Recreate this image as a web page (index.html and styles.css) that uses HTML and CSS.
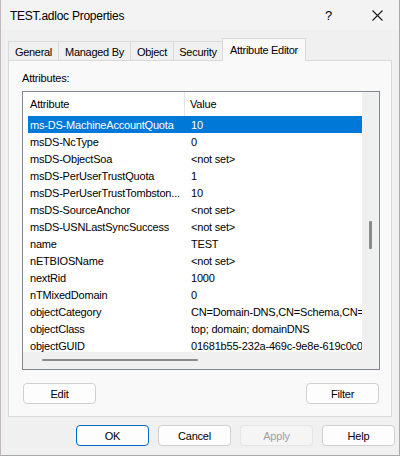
FILE: index.html
```html
<!DOCTYPE html>
<html>
<head>
<meta charset="utf-8">
<link rel="stylesheet" href="styles.css">
</head>
<body>
<div class="window">
  <div class="titlebar">
    <span class="title">TEST.adloc Properties</span>
    <span class="help">?</span>
    <svg class="close" width="11" height="11" viewBox="0 0 11 11"><path d="M0.5 0.5 L10.5 10.5 M10.5 0.5 L0.5 10.5" stroke="#1a1a1a" stroke-width="1.1" fill="none"/></svg>
  </div>
  <div class="tabs">
    <div class="tab t-general">General</div>
    <div class="tab t-managed">Managed By</div>
    <div class="tab t-object">Object</div>
    <div class="tab t-security">Security</div>
    <div class="tab active">Attribute Editor</div>
  </div>
  <div class="panel">
    <div class="label">Attributes:</div>
    <div class="listview">
      <div class="content">
        <div class="header">
          <div class="hcell hattr">Attribute</div>
          <div class="hcell hval">Value</div>
        </div>
        <div class="row selected"><div class="c1">ms-DS-MachineAccountQuota</div><div class="c2">10</div></div>
        <div class="row"><div class="c1">msDS-NcType</div><div class="c2">0</div></div>
        <div class="row"><div class="c1">msDS-ObjectSoa</div><div class="c2">&lt;not set&gt;</div></div>
        <div class="row"><div class="c1">msDS-PerUserTrustQuota</div><div class="c2">1</div></div>
        <div class="row"><div class="c1">msDS-PerUserTrustTombston...</div><div class="c2">10</div></div>
        <div class="row"><div class="c1">msDS-SourceAnchor</div><div class="c2">&lt;not set&gt;</div></div>
        <div class="row"><div class="c1">msDS-USNLastSyncSuccess</div><div class="c2">&lt;not set&gt;</div></div>
        <div class="row"><div class="c1">name</div><div class="c2">TEST</div></div>
        <div class="row"><div class="c1">nETBIOSName</div><div class="c2">&lt;not set&gt;</div></div>
        <div class="row"><div class="c1">nextRid</div><div class="c2">1000</div></div>
        <div class="row"><div class="c1">nTMixedDomain</div><div class="c2">0</div></div>
        <div class="row"><div class="c1">objectCategory</div><div class="c2">CN=Domain-DNS,CN=Schema,CN=Configuration,DC=TEST,DC=adloc</div></div>
        <div class="row"><div class="c1">objectClass</div><div class="c2">top; domain; domainDNS</div></div>
        <div class="row"><div class="c1">objectGUID</div><div class="c2">01681b55-232a-469c-9e8e-619c0c0a1b2c</div></div>
      </div>
      <div class="vscroll"><div class="vthumb"></div></div>
      <div class="hscroll"><div class="hthumb"></div></div>
      <div class="corner"></div>
    </div>
    <div class="panel-buttons">
      <button class="btn">Edit</button>
      <button class="btn">Filter</button>
    </div>
  </div>
  <div class="footer">
    <button class="btn default">OK</button>
    <button class="btn">Cancel</button>
    <button class="btn disabled">Apply</button>
    <button class="btn">Help</button>
  </div>
</div>
</body>
</html>
```
FILE: styles.css
```css
* { box-sizing: border-box; }
html, body { margin: 0; padding: 0; }
body {
  width: 400px;
  height: 456px;
  overflow: hidden;
  font-family: "Liberation Sans", Arial, sans-serif;
  font-size: 11px;
  color: #000;
  background: #f0f0f0;
}
.window {
  width: 400px;
  height: 456px;
  background: #f0f0f0;
  border-left: 1px solid #c4b6bb;
  border-right: 1px solid #a9a9a9;
  border-bottom: 1px solid #a9a9a9;
  display: flex;
  flex-direction: column;
}
.titlebar {
  height: 30px;
  flex: none;
  display: flex;
  align-items: center;
  padding-left: 9px;
  background: #f3f3f3;
}
.title {
  font-size: 12px;
  letter-spacing: -0.25px;
  flex: 1;
  padding-top: 1px;
}
.help {
  font-size: 13px;
  width: 10px;
  margin-right: 37px;
  padding-top: 1px;
}
.close {
  margin-right: 16px;
}
.tabs {
  height: 30px;
  flex: none;
  display: flex;
  align-items: flex-end;
  padding-left: 7px;
  padding-top: 8px;
}
.tab {
  height: 19px;
  display: flex;
  align-items: center;
  padding: 1px 0 0 0;
  justify-content: center;
  border: 1px solid #d9d9d9;
  border-bottom: none;
  border-right: none;
  background: #f0f0f0;
  letter-spacing: -0.3px;
  font-size: 11px;
}
.t-general { width: 50px; }
.t-managed { width: 72px; }
.t-object { width: 43px; }
.t-security { width: 49px; border-right: none; }
.tab.active {
  height: 23px;
  width: 84px;
  background: #f9f9f9;
  border: 1px solid #d9d9d9;
  border-bottom: none;
  margin-bottom: -1px;
  position: relative;
  z-index: 1;
  padding-bottom: 2px;
}
.panel {
  width: 384px;
  height: 357px;
  margin-left: 7px;
  background: #f9f9f9;
  border: 1px solid #d9d9d9;
  display: flex;
  flex-direction: column;
  padding: 10px 11px 0 13px;
}
.label {
  height: 20px;
  letter-spacing: -0.2px;
  padding-top: 1px;
}
.listview {
  width: 358px;
  height: 279px;
  border: 1px solid #828790;
  background: #fff;
  display: grid;
  grid-template-columns: 339px 17px;
  grid-template-rows: 260px 17px;
}
.content {
  overflow: hidden;
  padding-left: 5px;
  letter-spacing: -0.2px;
}
.header {
  height: 24px;
  display: flex;
}
.hcell {
  height: 24px;
  display: flex;
  align-items: center;
}
.hattr {
  width: 157px;
  padding-left: 2px;
  border-right: 1px solid #e5e5e5;
}
.hval {
  padding-left: 5px;
}
.row {
  height: 17px;
  display: flex;
  align-items: center;
  white-space: nowrap;
}
.row.selected {
  background: #0078d7;
  color: #fff;
}
.c1 {
  width: 157px;
  flex: none;
  padding-left: 2px;
}
.c2 {
  padding-left: 6px;
}
.vscroll {
  background: #f0f0f0;
  grid-row: 1 / 3;
  grid-column: 2;
  padding-top: 129px;
  padding-left: 7px;
}
.vthumb {
  width: 3px;
  height: 28px;
  background: #8a8a8a;
  border-radius: 1px;
}
.hscroll {
  background: #f0f0f0;
  grid-row: 2;
  grid-column: 1;
  padding-top: 7px;
  padding-left: 19px;
}
.hthumb {
  width: 156px;
  height: 2px;
  background: #8a8a8a;
  border-radius: 1px;
}
.corner { display: none; }
.panel-buttons {
  display: flex;
  justify-content: space-between;
  margin-top: 13px;
  padding-left: 1px;
  padding-right: 1px;
}
.btn {
  font-family: "Liberation Sans", Arial, sans-serif;
  font-size: 11px;
  letter-spacing: -0.2px;
  width: 73px;
  height: 21px;
  background: #fdfdfd;
  border: 1px solid #d0d0d0;
  border-radius: 4px;
  color: #000;
  padding: 1px 0 0 0;
}
.footer {
  display: flex;
  gap: 9px;
  padding-left: 75px;
  margin-top: 8px;
}
.btn.default {
  border: 1px solid #0067c0;
}
.btn.disabled {
  background: #f5f5f5;
  border-color: #e5e5e5;
  color: #a0a0a0;
}
```
